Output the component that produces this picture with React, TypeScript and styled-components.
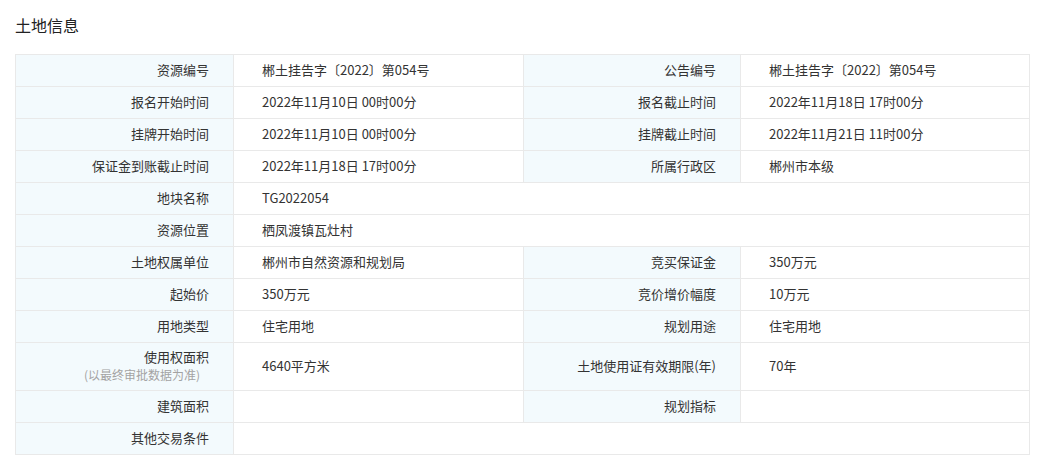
import React from "react";
import styled, { createGlobalStyle } from "styled-components";

const GlobalStyle = createGlobalStyle`
  html, body {
    margin: 0;
    padding: 0;
    background: #ffffff;
  }
  body {
    font-family: "Noto Sans CJK SC", "Noto Sans", sans-serif;
    color: #333333;
  }
`;

const Page = styled.div`
  padding: 14px 16px 0 15px;
`;

const Title = styled.h2`
  margin: 0 0 18px 0;
  font-size: 16px;
  line-height: 22px;
  font-weight: normal;
  color: #222222;
`;

const Table = styled.div`
  display: grid;
  grid-template-columns: 217px 289px 216px 1fr;
  gap: 1px;
  padding: 1px;
  background: #e9e9e9;
`;

const Label = styled.div<{ $tall?: boolean }>`
  background: #f3fafd;
  min-height: ${(p) => (p.$tall ? 47 : 31)}px;
  box-sizing: border-box;
  padding: 0 24px 1px 0;
  display: flex;
  flex-direction: column;
  justify-content: center;
  align-items: flex-end;
  text-align: right;
  font-size: 13px;
  line-height: 18px;
  color: #333333;
`;

const Note = styled.span`
  font-size: 12px;
  line-height: 18px;
  color: #a3a3a3;
  margin-right: 9px;
`;

const Value = styled.div<{ $span?: boolean }>`
  background: #ffffff;
  grid-column: ${(p) => (p.$span ? "span 3" : "span 1")};
  padding: 0 0 1px 28px;
  display: flex;
  align-items: center;
  font-size: 13px;
  line-height: 18px;
  color: #333333;
`;

type Cell = { label: string; value: string; note?: string };
type Row = { cells: Cell[]; tall?: boolean };

const rows: Row[] = [
  {
    cells: [
      { label: "资源编号", value: "郴土挂告字〔2022〕第054号" },
      { label: "公告编号", value: "郴土挂告字〔2022〕第054号" },
    ],
  },
  {
    cells: [
      { label: "报名开始时间", value: "2022年11月10日 00时00分" },
      { label: "报名截止时间", value: "2022年11月18日 17时00分" },
    ],
  },
  {
    cells: [
      { label: "挂牌开始时间", value: "2022年11月10日 00时00分" },
      { label: "挂牌截止时间", value: "2022年11月21日 11时00分" },
    ],
  },
  {
    cells: [
      { label: "保证金到账截止时间", value: "2022年11月18日 17时00分" },
      { label: "所属行政区", value: "郴州市本级" },
    ],
  },
  { cells: [{ label: "地块名称", value: "TG2022054" }] },
  { cells: [{ label: "资源位置", value: "栖凤渡镇瓦灶村" }] },
  {
    cells: [
      { label: "土地权属单位", value: "郴州市自然资源和规划局" },
      { label: "竞买保证金", value: "350万元" },
    ],
  },
  {
    cells: [
      { label: "起始价", value: "350万元" },
      { label: "竞价增价幅度", value: "10万元" },
    ],
  },
  {
    cells: [
      { label: "用地类型", value: "住宅用地" },
      { label: "规划用途", value: "住宅用地" },
    ],
  },
  {
    tall: true,
    cells: [
      { label: "使用权面积", note: "(以最终审批数据为准)", value: "4640平方米" },
      { label: "土地使用证有效期限(年)", value: "70年" },
    ],
  },
  {
    cells: [
      { label: "建筑面积", value: "" },
      { label: "规划指标", value: "" },
    ],
  },
  { cells: [{ label: "其他交易条件", value: "" }] },
];

export default function App() {
  return (
    <>
      <GlobalStyle />
      <Page>
        <Title>土地信息</Title>
        <Table>
          {rows.map((row, ri) =>
            row.cells.map((cell, ci) => (
              <React.Fragment key={`${ri}-${ci}`}>
                <Label $tall={row.tall}>
                  <span>{cell.label}</span>
                  {cell.note && <Note>{cell.note}</Note>}
                </Label>
                <Value $span={row.cells.length === 1}>{cell.value}</Value>
              </React.Fragment>
            ))
          )}
        </Table>
      </Page>
    </>
  );
}
